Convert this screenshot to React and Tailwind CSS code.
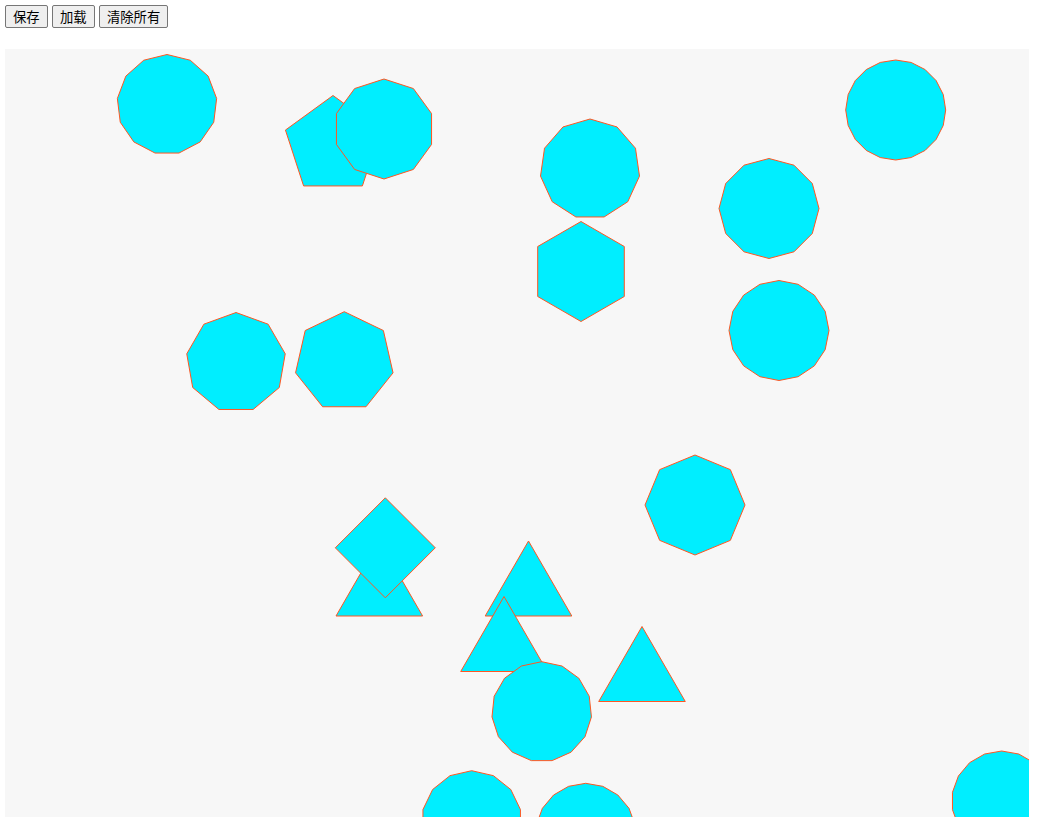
// shapes: [sides, cx, cy] — regular polygons, radius 50, first vertex pointing up
const shapes = [
  [13, 167, 104.5],
  [5, 333, 145.5],
  [10, 384, 129],
  [11, 590, 169],
  [20, 895.7, 110],
  [12, 769, 208.5],
  [6, 581, 271.5],
  [16, 779, 330.5],
  [9, 236, 362.5],
  [7, 344.3, 361.7],
  [8, 695, 505],
  [3, 379.3, 591],
  [4, 385.3, 547.8],
  [3, 528.5, 591],
  [3, 504, 646.5],
  [3, 642, 676.5],
  [15, 541.7, 711.7],
  [14, 471.7, 820.7],
  [18, 585.7, 833.3],
  [18, 1001.7, 801],
];

const polyPoints = (n, cx, cy, r = 50) => {
  const pts = [];
  for (let i = 0; i < n; i++) {
    const a = -Math.PI / 2 + (i * 2 * Math.PI) / n;
    pts.push(`${(cx + r * Math.cos(a)).toFixed(2)},${(cy + r * Math.sin(a)).toFixed(2)}`);
  }
  return pts.join(' ');
};

const Btn = ({ children }) => (
  <button className="h-[23px] px-[7px] border border-[#767676] rounded-[2px] bg-[#efefef] text-[13.33px] leading-none text-black">
    {children}
  </button>
);

export default function App() {
  return (
    <div className="p-[5px] bg-white min-h-screen font-['Noto_Sans_CJK_SC','Noto_Sans',sans-serif]">
      {/* Toolbar */}
      <div className="flex gap-[4.3px]">
        <Btn>保存</Btn>
        <Btn>加载</Btn>
        <Btn>清除所有</Btn>
      </div>

      {/* Canvas */}
      <div className="mt-[21px] w-[1024px] h-[768px] bg-[#f7f7f7] overflow-hidden">
        <svg width="1024" height="768" viewBox="5 49 1024 768" className="block">
          {shapes.map(([n, cx, cy], i) => (
            <polygon
              key={i}
              points={polyPoints(n, cx, cy)}
              fill="#00eeff"
              stroke="#ff5722"
              strokeWidth="1"
            />
          ))}
        </svg>
      </div>
    </div>
  );
}
